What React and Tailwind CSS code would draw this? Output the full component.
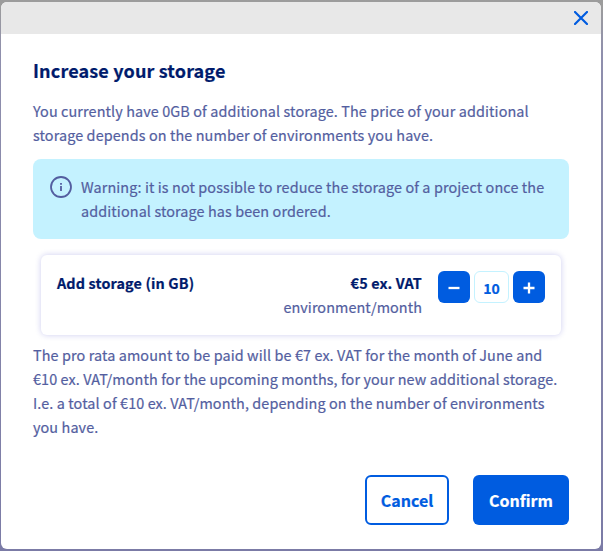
const intro = [
  'You currently have 0GB of additional storage. The price of your additional',
  'storage depends on the number of environments you have.',
];
const warning = [
  'Warning: it is not possible to reduce the storage of a project once the',
  'additional storage has been ordered.',
];
const summary = [
  'The pro rata amount to be paid will be €7 ex. VAT for the month of June and',
  '€10 ex. VAT/month for the upcoming months, for your new additional storage.',
  'I.e. a total of €10 ex. VAT/month, depending on the number of environments',
  'you have.',
];

function Lines({ lines }) {
  return lines.map((line) => (
    <span key={line} className="block whitespace-nowrap">{line}</span>
  ));
}

export default function App() {
  return (
    <div className="flex h-[551px] w-[603px] bg-linear-to-b from-[#9c9c9c] from-[1%] via-[#8f8fad] via-[10%] to-[#7b7ba6] pt-[2px] pr-[2px] pb-[2px] pl-px font-['Noto_Sans_CJK_SC',sans-serif] text-[14.4px] leading-6 tracking-[0.107px] text-[#535ea0] [-webkit-text-stroke:0.2px_currentColor]">
      <div role="dialog" className="flex w-full flex-col overflow-hidden rounded-md bg-white">
        <header className="flex h-8 shrink-0 items-center justify-end bg-[#e8e8e8] pr-[13px]">
          <button aria-label="Close">
            <svg width="14" height="14" viewBox="0 0 14 14" fill="none" stroke="#005ce0" strokeWidth="2.2" strokeLinecap="round">
              <path d="M1 1l12 12M13 1L1 13" />
            </svg>
          </button>
        </header>
        <main className="flex flex-col px-8 pt-[22px]">
          <h1 className="text-[18px] leading-7 font-bold tracking-[0.14px] text-[#001b6c]">Increase your storage</h1>
          <p className="mt-[15px]"><Lines lines={intro} /></p>
          <div className="mt-3 flex h-20 rounded-lg bg-[#c4f2ff] pt-4 pl-[17px]">
            <svg className="mt-px mr-[9px] shrink-0" width="22" height="22" viewBox="0 0 22 22" fill="none" stroke="#535ea0" strokeWidth="1.8">
              <circle cx="11" cy="11" r="10" />
              <path d="M11 10v5M11 7v1.8" />
            </svg>
            <p><Lines lines={warning} /></p>
          </div>
          <section className="mx-2 mt-4 flex h-20 rounded-md pt-4 pr-4 pl-4 shadow-[0_0_6px_rgba(0,0,180,0.2)]">
            <h2 className="flex-1 font-bold tracking-[0.13px] text-[#001b6c]">Add storage (in GB)</h2>
            <div className="text-right">
              <p className="font-bold tracking-[0.15px] text-[#001b6c]">€5 ex. VAT</p>
              <p className="tracking-[0.07px]">environment/month</p>
            </div>
            <div className="ml-4 flex gap-1">
              <button aria-label="Decrease" className="flex size-8 items-center justify-center rounded-md bg-[#005ce0] pt-px">
                <svg width="12" height="12" viewBox="0 0 12 12" stroke="white" strokeWidth="2.3"><path d="M.5 6h11" /></svg>
              </button>
              <span className="flex h-8 w-[35px] items-center justify-center rounded-md border border-[#c4f2ff] pt-px text-[14px] font-bold text-[#005ce0]">10</span>
              <button aria-label="Increase" className="flex size-8 items-center justify-center rounded-md bg-[#005ce0] pt-px">
                <svg width="12" height="12" viewBox="0 0 12 12" stroke="white" strokeWidth="2.3"><path d="M.5 6h11M6 .5v11" /></svg>
              </button>
            </div>
          </section>
          <p className="mt-2"><Lines lines={summary} /></p>
          <div className="mt-9 flex justify-end gap-6 text-[16px] font-bold tracking-normal">
            <button className="h-[50px] w-[84px] rounded-md border-2 border-[#005ce0] tracking-normal text-[#005ce0]">Cancel</button>
            <button className="h-[50px] w-24 rounded-md bg-[#005ce0] tracking-normal text-white">Confirm</button>
          </div>
        </main>
      </div>
    </div>
  );
}
